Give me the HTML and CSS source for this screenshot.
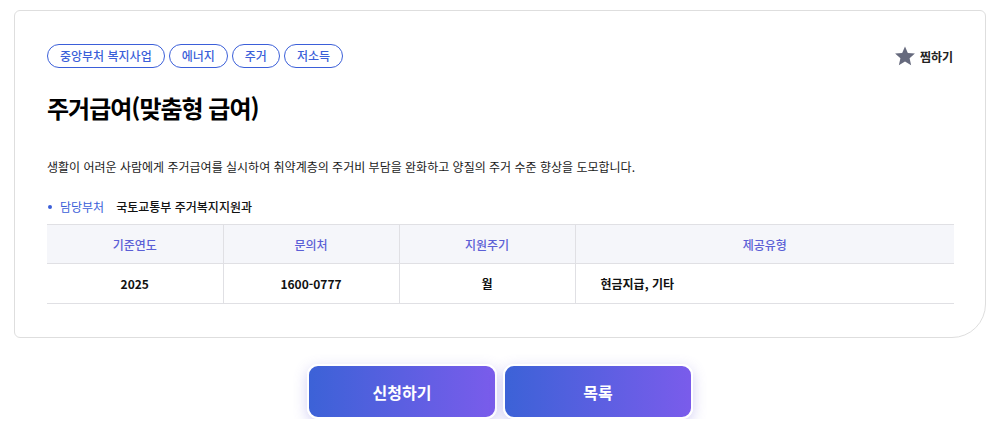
FILE: index.html
```html
<!DOCTYPE html>
<html lang="ko">
<head>
<meta charset="utf-8">
<link rel="stylesheet" href="styles.css">
</head>
<body>
<div class="card">
  <div class="top">
    <div class="tags">
      <span class="tag">중앙부처 복지사업</span>
      <span class="tag">에너지</span>
      <span class="tag">주거</span>
      <span class="tag">저소득</span>
    </div>
    <div class="fav">
      <svg width="22" height="22" viewBox="0 0 24 24"><path d="M12 1.5l3.1 7.1 7.7.7-5.8 5.1 1.7 7.6L12 18l-6.7 4 1.7-7.6-5.8-5.1 7.7-.7z" fill="#666a7d"/></svg>
      <span>찜하기</span>
    </div>
  </div>
  <h1 class="title">주거급여(맞춤형 급여)</h1>
  <p class="desc">생활이 어려운 사람에게 주거급여를 실시하여 취약계층의 주거비 부담을 완화하고 양질의 주거 수준 향상을 도모합니다.</p>
  <div class="dept"><span class="dot"></span><span class="dept-label">담당부처</span><span class="dept-name">국토교통부 주거복지지원과</span></div>
  <table class="info">
    <thead>
      <tr><th class="c1">기준연도</th><th class="c2">문의처</th><th class="c3">지원주기</th><th class="c4">제공유형</th></tr>
    </thead>
    <tbody>
      <tr><td>2025</td><td>1600-0777</td><td>월</td><td class="left">현금지급, 기타</td></tr>
    </tbody>
  </table>
</div>
<div class="actions">
  <button class="btn">신청하기</button>
  <button class="btn">목록</button>
</div>
</body>
</html>
```
FILE: styles.css
```css
* { box-sizing: border-box; }
html, body { margin: 0; padding: 0; background: #fff; }
body {
  font-family: "Noto Sans CJK KR", "Noto Sans", sans-serif;
  color: #111;
  padding: 10px 13px 0 14px;
}
.card {
  border: 1px solid #dedede;
  border-radius: 6px 6px 34px 6px;
  padding: 33px 31px 33px 32px;
}
.top {
  display: flex;
  justify-content: space-between;
  align-items: center;
}
.tags { display: flex; gap: 4px; }
.tag {
  display: inline-flex;
  align-items: center;
  height: 24px;
  padding: 0 12px;
  border: 1px solid #3b5fd9;
  border-radius: 12px;
  color: #3b5fd9;
  font-size: 12px;
  font-weight: 500;
  line-height: 1;
}
.fav {
  display: flex;
  align-items: center;
  gap: 4px;
  font-size: 12px;
  font-weight: 700;
  color: #222;
  margin-right: 1px;
}
.title {
  margin: 24px 0 0;
  font-size: 24px;
  font-weight: 700;
  line-height: 32px;
  letter-spacing: -1px;
  color: #000;
}
.desc {
  margin: 34px 0 0;
  font-size: 12px;
  line-height: 18px;
  color: #1a1a1a;
}
.dept {
  display: flex;
  align-items: center;
  margin-top: 22px;
  font-size: 12px;
  line-height: 18px;
}
.dot {
  width: 4px; height: 4px; border-radius: 50%;
  background: #3b5fd9;
  margin: 0 8px 0 1px;
}
.dept-label { color: #3b5fd9; margin-right: 12px; }
.dept-name { color: #111; font-weight: 500; }
.info {
  width: 100%;
  margin-top: 8px;
  border-collapse: collapse;
  font-size: 12px;
}
.info th, .info td {
  border-top: 1px solid #e0e0e4;
  border-bottom: 1px solid #e0e0e4;
  border-left: 1px solid #e0e0e4;
  text-align: center;
}
.info th:first-child, .info td:first-child { border-left: none; }
.info th {
  background: #f5f6fa;
  color: #5b5fd6;
  font-weight: 500;
  height: 39px;
}
.info td {
  height: 40px;
  font-weight: 700;
  color: #111;
}
.info td.left { text-align: left; padding-left: 25px; }
.c1, .c2, .c3 { width: 176px; }
.actions {
  display: flex;
  justify-content: center;
  gap: 6px;
  margin-top: 26px;
}
.btn {
  width: 190px;
  height: 55px;
  border: 2px solid #fff;
  border-radius: 11px;
  background: linear-gradient(90deg, #3c62d7, #7a5ceb);
  color: #fff;
  font-family: "Noto Sans CJK KR", "Noto Sans", sans-serif;
  font-size: 16px;
  font-weight: 700;
  box-shadow: 0 4px 14px rgba(110, 100, 220, 0.3);
}
```
